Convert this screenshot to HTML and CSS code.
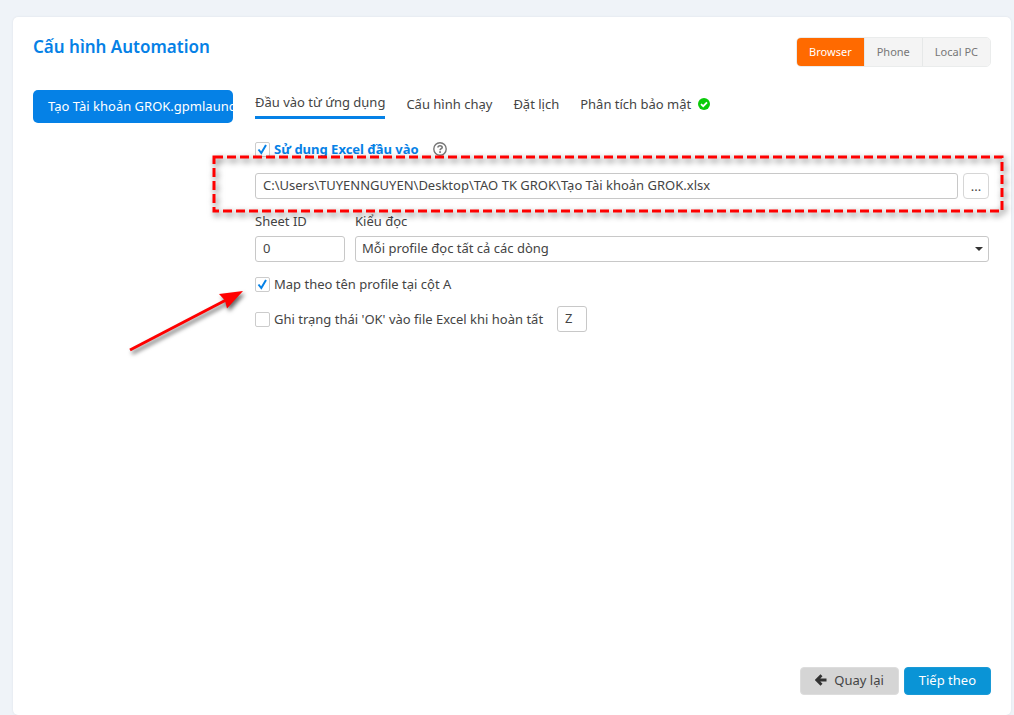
FILE: index.html
```html
<!DOCTYPE html>
<html lang="vi">
<head>
<meta charset="utf-8">
<meta name="viewport" content="width=device-width, initial-scale=1">
<title>Cấu hình Automation</title>
<link rel="stylesheet" href="styles.css">
</head>
<body class="page">
<main class="card">
  <header class="header">
    <h1 class="title">Cấu hình Automation</h1>
    <div class="modes">
      <button class="mode mode-active" type="button">Browser</button>
      <button class="mode" type="button">Phone</button>
      <button class="mode" type="button">Local PC</button>
    </div>
  </header>
  <div class="body">
    <aside class="sidebar">
      <button class="script" type="button">Tạo Tài khoản GROK.gpmlaunc</button>
    </aside>
    <section class="content">
      <nav class="tabs">
        <a class="tab tab-active" href="#input">Đầu vào từ ứng dụng</a>
        <a class="tab" href="#run">Cấu hình chạy</a>
        <a class="tab" href="#schedule">Đặt lịch</a>
        <a class="tab" href="#security">Phân tích bảo mật
          <svg class="ok-icon" viewBox="0 0 12 12" aria-hidden="true"><circle cx="6" cy="6" r="6" fill="#0bcb0b"/><path d="M3 6.2 5.2 8.2 9 4.3" fill="none" stroke="#fff" stroke-width="1.8"/></svg>
        </a>
      </nav>
      <div class="check-row check-excel">
        <label class="check check-strong"><input class="box" type="checkbox" checked><svg class="tick" viewBox="0 0 15 15" aria-hidden="true"><path d="M3.5 7.5 6.3 11 11 3"/></svg>Sử dụng Excel đầu vào</label>
        <svg class="help-icon" viewBox="0 0 14 14" aria-label="Trợ giúp"><circle cx="7" cy="7" r="6.2" fill="none" stroke="#777" stroke-width="1.4"/><path d="M4.9 5.5C5 4.2 5.9 3.7 7 3.7s2.2.6 2.2 1.7C9.2 6.7 7.1 6.7 7.1 8.3" fill="none" stroke="#777" stroke-width="1.6"/><rect x="6.2" y="9.2" width="1.7" height="1.7" fill="#777"/></svg>
      </div>
      <div class="file-row">
        <input class="field file-path" type="text" aria-label="File Excel" value="C:\Users\TUYENNGUYEN\Desktop\TAO TK GROK\Tạo Tài khoản GROK.xlsx">
        <button class="browse" type="button" aria-label="Chọn file">...</button>
        <svg class="highlight" aria-hidden="true"><rect width="100%" height="100%"/></svg>
      </div>
      <div class="options">
        <label class="option option-sheet">Sheet ID
          <input class="field" type="text" value="0">
        </label>
        <div class="option option-mode">
          <label for="read-mode">Kiểu đọc</label>
          <div class="select-wrap">
            <select class="field select" id="read-mode"><option>Mỗi profile đọc tất cả các dòng</option></select>
            <svg class="caret" viewBox="0 0 8 4" aria-hidden="true"><path d="M0 0h8L4 4z" fill="#333"/></svg>
          </div>
        </div>
      </div>
      <div class="check-row check-map">
        <label class="check"><input class="box" type="checkbox" checked><svg class="tick" viewBox="0 0 15 15" aria-hidden="true"><path d="M3.5 7.5 6.3 11 11 3"/></svg>Map theo tên profile tại cột A</label>
        <svg class="arrow" viewBox="0 0 120 68" aria-hidden="true"><path d="M3 60 100 9.5" stroke="#f00" stroke-width="3"/><path d="M116 1 100 18.5 98 10.5 92 4z" fill="#f00"/></svg>
      </div>
      <div class="check-row check-status">
        <label class="check"><input class="box" type="checkbox"><svg class="tick" viewBox="0 0 15 15" aria-hidden="true"><path d="M3.5 7.5 6.3 11 11 3"/></svg>Ghi trạng thái 'OK' vào file Excel khi hoàn tất</label>
        <input class="field column-field" type="text" value="Z" aria-label="Cột ghi trạng thái">
      </div>
    </section>
  </div>
  <footer class="footer">
    <button class="action action-back" type="button"><svg class="back-icon" viewBox="0 0 12 12" aria-hidden="true"><path d="M11.5 6H2M6.5 1.2 1.8 6 6.5 10.8" fill="none" stroke="#333" stroke-width="2.8"/></svg>Quay lại</button>
    <button class="action action-next" type="button">Tiếp theo</button>
  </footer>
</main>
</body>
</html>
```

FILE: styles.css
```css
* { box-sizing: border-box; }

.page {
  display: flex;
  min-height: 100vh;
  margin: 0;
  padding: 17px 3px 0 13px;
  background: #eff3f8;
  color: #444;
  font: 13px/20px "Noto Sans", "Open Sans", sans-serif;
}

button, input, select { font: inherit; color: inherit; }
button { cursor: pointer; }

.card {
  display: flex;
  flex: 1;
  flex-direction: column;
  min-width: 0;
  padding: 16px 20px 20px;
  border-radius: 5px;
  background: #fff;
  box-shadow: 0 0 2px #d9dde3;
}

.header {
  display: flex;
  justify-content: space-between;
  align-items: flex-start;
  height: 57px;
}

.title {
  margin: 0;
  color: #0581e6;
  font-size: 17px;
  font-weight: 600;
  line-height: 28px;
}

.modes {
  display: flex;
  margin-top: 4px;
  overflow: hidden;
  border: 1px solid #eaecec;
  border-radius: 5px;
}

.mode {
  height: 28px;
  padding: 0 12px;
  border: 0;
  border-left: 1px solid #e6e8e8;
  background: #f4f4f4;
  color: #777;
  font-size: 11px;
}

.mode-active {
  border-left: 0;
  background: #ff6a00;
  color: #fff;
}

.body {
  display: grid;
  flex: 1;
  grid-template-columns: 200px minmax(0, 1fr);
  align-items: start;
  gap: 22px;
}

.script {
  width: 100%;
  height: 33px;
  padding: 0 0 2px 15px;
  overflow: hidden;
  border: 0;
  border-radius: 5px;
  background: #0581e6;
  color: #fff;
  text-align: left;
  white-space: nowrap;
}

.content { padding-right: 2px; }

.tabs {
  display: flex;
  gap: 21px;
  margin-bottom: 20px;
}

.tab {
  display: flex;
  align-items: center;
  gap: 7px;
  height: 29px;
  padding-bottom: 2px;
  color: inherit;
  text-decoration: none;
}

.tab-active { border-bottom: 3px solid #0581e6; }

.ok-icon { width: 12px; height: 12px; }

.check-row {
  display: flex;
  align-items: center;
  position: relative;
  gap: 14px;
}

.check-excel { height: 20px; margin-bottom: 14px; }
.check-map { height: 20px; margin: 12px 0; }

.check {
  display: grid;
  grid-template-columns: 15px auto;
  align-items: center;
  column-gap: 4px;
}

.check-strong { color: #0581e6; font-weight: 700; }

.box {
  grid-area: 1 / 1;
  width: 15px;
  height: 15px;
  margin: 0;
  appearance: none;
  border: 1px solid #ccc;
  border-radius: 2px;
  background: #fff;
}

.tick {
  display: none;
  grid-area: 1 / 1;
  width: 15px;
  height: 15px;
  fill: none;
  stroke: #0581e6;
  stroke-width: 2;
  pointer-events: none;
}

.box:checked + .tick { display: block; }

.help-icon { width: 14px; height: 14px; }

.file-row {
  display: flex;
  position: relative;
  gap: 5px;
}

.field {
  width: 100%;
  height: 26px;
  padding: 0 7px 2px;
  border: 1px solid #c8c8c8;
  border-radius: 3px;
  background: #fff;
}

.file-path { flex: 1; min-width: 0; }

.browse {
  width: 26px;
  height: 26px;
  padding: 0;
  border: 1px solid #d6d6d6;
  border-radius: 4px;
  background: #fff;
}

.highlight {
  position: absolute;
  top: -16px;
  left: -41px;
  width: calc(100% + 54px);
  height: 54px;
  overflow: visible;
  fill: none;
  stroke: #f00;
  stroke-width: 3;
  stroke-dasharray: 9 4;
  filter: drop-shadow(2px 3px 3px #0009);
  pointer-events: none;
}

.options {
  display: flex;
  gap: 10px;
  margin-top: 12px;
}

.option {
  display: flex;
  flex-direction: column;
  gap: 5px;
}

.option-sheet { width: 90px; }
.option-mode { flex: 1; min-width: 0; }
.select-wrap { position: relative; }
.select { display: block; padding: 0 6px 2px; appearance: none; }

.caret {
  position: absolute;
  top: 11px;
  right: 6px;
  width: 8px;
  height: 4px;
  pointer-events: none;
}

.arrow {
  position: absolute;
  top: 16px;
  left: -128px;
  width: 120px;
  height: 68px;
  overflow: visible;
  filter: drop-shadow(2px 3px 2px #0009);
  pointer-events: none;
}

.column-field { width: 30px; }

.footer {
  display: flex;
  justify-content: flex-end;
  gap: 5px;
}

.action {
  display: flex;
  align-items: center;
  height: 28px;
  padding: 0 14px 2px;
  border: 1px solid #ddd;
  border-radius: 4px;
}

.action-back { gap: 7px; background: #d5d5d5; }
.action-next { border-color: #1a9ad6; background: #0a94d6; color: #fff; }
.back-icon { width: 12px; height: 12px; }
```
